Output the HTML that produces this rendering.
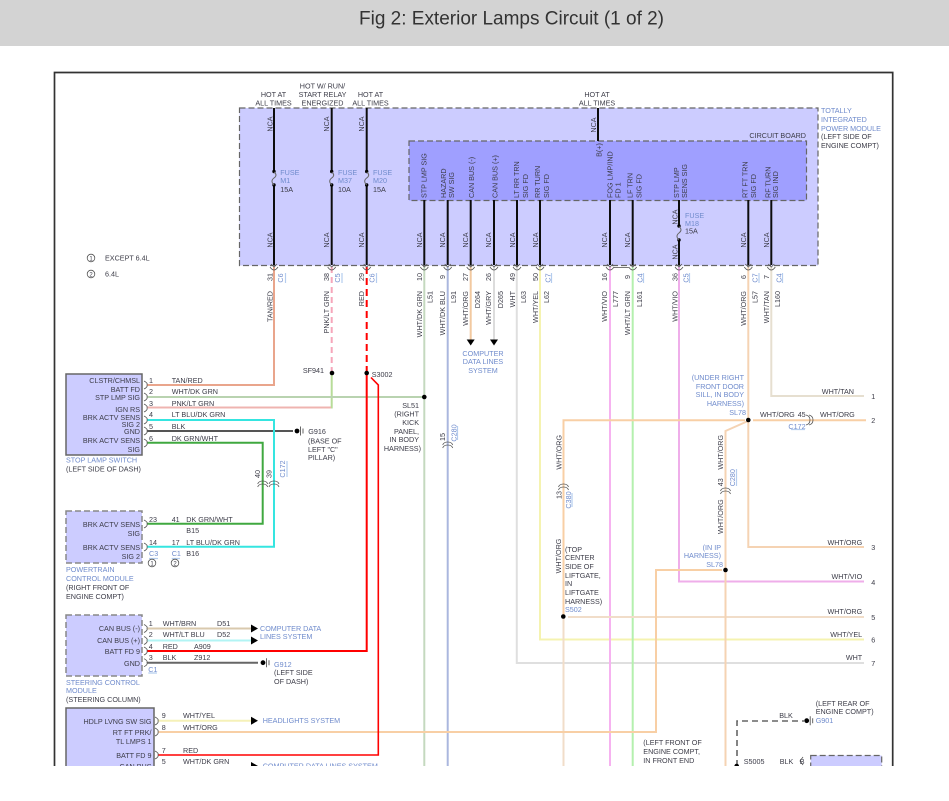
<!DOCTYPE html>
<html><head><meta charset="utf-8"><title>Fig 2: Exterior Lamps Circuit (1 of 2)</title>
<style>
html,body{margin:0;padding:0;background:#fff;width:949px;height:801px;overflow:hidden}
svg{display:block}
text{font-family:"Liberation Sans",sans-serif;font-size:7.2px;fill:#3c3c48}
.b,.b text{fill:#6f8bcc}
.e{text-anchor:end}.m{text-anchor:middle}
.w{fill:none;stroke-width:2}
.k{fill:none;stroke:#111;stroke-width:2}
.c{fill:none;stroke:#555;stroke-width:.8}
.u{stroke:#b5cdee;stroke-width:1.2}
</style></head><body>
<svg width="949" height="801" viewBox="0 0 949 801" xmlns="http://www.w3.org/2000/svg">
<defs>
<filter id="bl" filterUnits="userSpaceOnUse" x="0" y="46" width="949" height="755"><feGaussianBlur stdDeviation="0.3"/></filter>
<path id="lc" d="M-3-4Q1-2 0 0Q1 2-3 4" fill="none" stroke="#555" stroke-width=".8"/>
<path id="bc" d="M-4 1Q-2 4 0 4Q2 4 4 1M-3-2L0 1L3-2" fill="none" stroke="#555" stroke-width=".8"/>
<path id="tc" d="M-5 3Q-4 0 0 0Q4 0 5 3M-5 6Q-4 3 0 3Q4 3 5 6" fill="none" stroke="#555" stroke-width=".8"/>
<path id="vc" d="M-4-5Q0-4 0 0Q0 4-4 5M-1-5Q3-4 3 0Q3 4-1 5" fill="none" stroke="#555" stroke-width=".8"/>
<path id="ar" d="M0-4L7 0L0 4Z" fill="#000"/>
<path id="ad" d="M-4 0L4 0L0 6Z" fill="#000"/>
<g id="gnd"><circle r="2.4" fill="#000"/><path d="M3.5-4.5V4.5M6-2.5V2.5" stroke="#555" stroke-width=".9"/></g>
</defs>
<rect width="949" height="46" fill="#d3d3d3"/>
<text x="359" y="24.500" textLength="305" style="font-size:19px;fill:#333">Fig 2: Exterior Lamps Circuit (1 of 2)</text>
<g filter="url(#bl)">
<path d="M54.500 766V72.500H892.700V766" fill="none" stroke="#333" stroke-width="1.700"/>

<rect x="239.500" y="108" width="578.500" height="157.500" fill="#ccf" stroke="#666" stroke-width="1.200" stroke-dasharray="6 3"/>
<rect x="409" y="141" width="397.500" height="59.500" fill="#9f9fff" stroke="#666" stroke-width="1.200" stroke-dasharray="6 3"/>

<!-- TIPM wires -->
<path class="k" d="M274 108V171M274 186V265M331.700 108V171M331.700 186V265M366.700 108V171M366.700 186V265M598 108V141M424.300 200V265M447.700 200V265M470.700 200V265M494 200V265M517 200V265M540 200V265M610 200V265M632.700 200V265M679 200V226M679 240V265M748.300 200V265M771.300 200V265"/>
<g fill="#000"><circle cx="274" cy="171.500" r="1.700"/><circle cx="274" cy="185" r="1.700"/><circle cx="331.700" cy="171.500" r="1.700"/><circle cx="331.700" cy="185" r="1.700"/><circle cx="366.700" cy="171.500" r="1.700"/><circle cx="366.700" cy="185" r="1.700"/><circle cx="679" cy="226" r="1.700"/><circle cx="679" cy="240" r="1.700"/></g>
<path d="M274 172Q278 175 274 178Q270 181 274 185M331.700 172Q335.700 175 331.700 178Q327.700 181 331.700 185M366.700 172Q370.700 175 366.700 178Q362.700 181 366.700 185M679 226.500Q683 230 679 233Q675 236 679 240" fill="none" stroke="#666"/>

<!-- harness wires -->
<g class="w">
<path stroke="#e9a58c" d="M274 267V385H147"/>
<path stroke="#f6a6ba" stroke-dasharray="6 4" d="M331.700 267V373"/>
<path stroke="#b7dc98" d="M331.700 373V408.500"/>
<path stroke="#efb4b0" d="M331 407.500H147"/>
<path stroke="#b9d3b0" d="M147 397H424"/>
<path stroke="#c4d9bf" d="M424.300 267V766"/>
<path stroke="#aab7de" d="M447.700 267V766"/>
<path stroke="#f2c9a0" d="M470.700 267V340"/>
<path stroke="#dcdcdc" d="M494 267V340"/>
<path stroke="#dfdfdf" d="M516.800 267V663H864"/>
<path stroke="#f5f3b0" d="M540 267V639.500H864"/>
<path stroke="#f6b2f0" d="M610 267V766"/>
<path stroke="#b4f0ae" d="M632.700 267V766"/>
<path stroke="#efaeea" d="M679 267V581.500H864"/>
<path stroke="#f5d3b3" d="M748.300 267V547H864"/>
<path stroke="#e6dfd0" d="M771.300 267V396H864"/>
<path stroke="#f8cfa5" d="M866 420.300H753M745 420.300H563.500V616"/>
<path stroke="#f1ddc9" d="M563.500 616V766M568 617H864"/>
<path stroke="#f5d3b3" d="M748 421L725.500 431V766"/>
<path stroke="#f8cfa5" d="M722 570H656V732H158"/>
<path stroke="#d9c9ae" d="M147 628.500H252"/>
<path stroke="#b2f4f4" d="M147 640.500H252"/>
<path stroke="#f5f1b8" d="M158 720.700H252"/>
<path stroke="#666" d="M147 662.700H258"/>
<path stroke="#555" d="M147 431H293"/>
<path stroke="#35e5e0" d="M147 420H274V546.700H147"/>
<path stroke="#3fa83f" d="M147 442.700H262.700V523.700H147"/>
</g>
<g fill="none" stroke="#f00" stroke-width="2">
<path stroke-dasharray="7 4" d="M366.700 267V373"/>
<path d="M366.700 373V651H147"/>
<path stroke-width="1.600" d="M371 377.500L378.300 385V755H158"/>
</g>
<path d="M737 766V721H804" fill="none" stroke="#666" stroke-width="1.600" stroke-dasharray="6 4"/>

<!-- boxes -->
<rect x="66" y="374" width="76" height="81" fill="#ccf" stroke="#666" stroke-width="1.500"/>
<rect x="66" y="511" width="76" height="52" fill="#ccf" stroke="#888" stroke-width="1.500" stroke-dasharray="6 3"/>
<rect x="66" y="615" width="76" height="61" fill="#ccf" stroke="#888" stroke-width="1.500" stroke-dasharray="6 3"/>
<rect x="66" y="708" width="88" height="70" fill="#ccf" stroke="#666" stroke-width="1.500"/>
<rect x="810.700" y="755.500" width="71" height="30" fill="#ccf" stroke="#666" stroke-width="1.200" stroke-dasharray="6 3"/>

<!-- nodes -->
<g fill="#000"><circle cx="332" cy="373" r="2.300"/><circle cx="366.700" cy="373" r="2.300"/><circle cx="424.300" cy="397" r="2.300"/><circle cx="748.300" cy="420" r="2.300"/><circle cx="725.500" cy="570" r="2.300"/><circle cx="563.300" cy="616.500" r="2.300"/><circle cx="736.700" cy="766" r="2.300"/></g>

<!-- connector symbols -->
<g>
<use href="#bc" x="274" y="266"/><use href="#bc" x="331.700" y="266"/><use href="#bc" x="366.700" y="266"/><use href="#bc" x="424.300" y="266"/><use href="#bc" x="447.700" y="266"/><use href="#bc" x="470.700" y="266"/><use href="#bc" x="494" y="266"/><use href="#bc" x="517" y="266"/><use href="#bc" x="540" y="266"/><use href="#bc" x="610" y="266"/><use href="#bc" x="632.700" y="266"/><use href="#bc" x="679" y="266"/><use href="#bc" x="748.300" y="266"/><use href="#bc" x="771.300" y="266"/>
<path class="c" d="M614 267.500H628.500"/>
<use href="#lc" x="147" y="385"/><use href="#lc" x="147" y="397"/><use href="#lc" x="147" y="408"/><use href="#lc" x="147" y="420"/><use href="#lc" x="147" y="431"/><use href="#lc" x="147" y="443"/>
<use href="#lc" x="147" y="524"/><use href="#lc" x="147" y="547"/>
<use href="#lc" x="147" y="628.500"/><use href="#lc" x="147" y="640.500"/><use href="#lc" x="147" y="651"/><use href="#lc" x="147" y="662.700"/>
<use href="#lc" x="158" y="721"/><use href="#lc" x="158" y="732"/><use href="#lc" x="158" y="755"/>
<use href="#tc" x="262.700" y="481"/><use href="#tc" x="274" y="481"/>
<use href="#tc" x="447.700" y="442"/><use href="#tc" x="563.500" y="484"/><use href="#tc" x="725.500" y="488"/>
<use href="#vc" x="810" y="420"/>
<path class="c" d="M803 757L800 761L803 765"/>
</g>
<use href="#ar" x="251" y="628.500"/><use href="#ar" x="251" y="640.500"/><use href="#ar" x="251" y="720.700"/><use href="#ar" x="251" y="766"/>
<use href="#ad" x="470.700" y="339.500"/><use href="#ad" x="494" y="339.500"/>
<use href="#gnd" x="297" y="431"/><use href="#gnd" x="263" y="662.700"/><use href="#gnd" x="806.700" y="720.700"/>

<!-- underlines for connector refs -->
<path class="u" d="M285.500 273V283M342 273V283M376.500 273V283M551.500 273V283M643.500 273V283M689.500 273V283M759 273V283M782.500 273V283M287 461V477M457.500 426V440M572 493V507M736.500 469V486M149 558.500H158M171.700 558.500H180M148.300 673H157M791 429.500H805"/>

<g>
<!-- top labels -->
<text class="m" x="273.500" y="97">HOT AT</text><text class="m" x="273.500" y="105.700">ALL TIMES</text>
<text class="m" x="322.500" y="88.700">HOT W/ RUN/</text><text class="m" x="322.500" y="97">START RELAY</text><text class="m" x="322.500" y="105.700">ENERGIZED</text>
<text class="m" x="370.500" y="97">HOT AT</text><text class="m" x="370.500" y="105.700">ALL TIMES</text>
<text class="m" x="597" y="97">HOT AT</text><text class="m" x="597" y="105.700">ALL TIMES</text>
<text class="b" x="821" y="113">TOTALLY</text><text class="b" x="821" y="122">INTEGRATED</text><text class="b" x="821" y="131">POWER MODULE</text><text x="821" y="139">(LEFT SIDE OF</text><text x="821" y="148">ENGINE COMPT)</text>
<text class="e" x="806" y="138">CIRCUIT BOARD</text>
<!-- fuse labels -->
<g class="b"><text x="280.300" y="175">FUSE</text><text x="280.300" y="183">M1</text><text x="338" y="175">FUSE</text><text x="338" y="183">M37</text><text x="373" y="175">FUSE</text><text x="373" y="183">M20</text><text x="685" y="218">FUSE</text><text x="685" y="226">M18</text></g>
<text x="280.300" y="192">15A</text><text x="338" y="192">10A</text><text x="373" y="192">15A</text><text x="685" y="233.700">15A</text>
<!-- NCA -->
<g>
<text class="m" transform="translate(272.500,124) rotate(-90)">NCA</text><text class="m" transform="translate(329,124) rotate(-90)">NCA</text><text class="m" transform="translate(364.200,124) rotate(-90)">NCA</text><text class="m" transform="translate(595.800,125) rotate(-90)">NCA</text>
<text class="m" transform="translate(272.500,240) rotate(-90)">NCA</text><text class="m" transform="translate(329,240) rotate(-90)">NCA</text><text class="m" transform="translate(364.200,240) rotate(-90)">NCA</text>
<text class="m" transform="translate(422.200,240) rotate(-90)">NCA</text><text class="m" transform="translate(445.200,240) rotate(-90)">NCA</text><text class="m" transform="translate(467.800,240) rotate(-90)">NCA</text><text class="m" transform="translate(490.800,240) rotate(-90)">NCA</text><text class="m" transform="translate(515.200,240) rotate(-90)">NCA</text><text class="m" transform="translate(538.200,240) rotate(-90)">NCA</text>
<text class="m" transform="translate(606.800,240) rotate(-90)">NCA</text><text class="m" transform="translate(629.800,240) rotate(-90)">NCA</text><text class="m" transform="translate(745.800,240) rotate(-90)">NCA</text><text class="m" transform="translate(769.200,240) rotate(-90)">NCA</text>
<text class="m" transform="translate(677.500,217) rotate(-90)">NCA</text><text class="m" transform="translate(677.500,252) rotate(-90)">NCA</text>
</g>
<!-- board labels -->
<text transform="translate(426.500,198) rotate(-90)">STP LMP SIG</text><text transform="translate(446.200,198) rotate(-90)">HAZARD</text><text transform="translate(454.200,198) rotate(-90)">SW SIG</text><text transform="translate(474.200,198) rotate(-90)">CAN BUS (-)</text><text transform="translate(497.500,198) rotate(-90)">CAN BUS (+)</text><text transform="translate(519.200,198) rotate(-90)">LT RR TRN</text><text transform="translate(528.200,198) rotate(-90)">SIG FD</text><text transform="translate(539.800,198) rotate(-90)">RR TURN</text><text transform="translate(548.800,198) rotate(-90)">SIG FD</text>
<text transform="translate(612.500,198) rotate(-90)">FOG LMP/IND</text><text transform="translate(620.500,198) rotate(-90)">FD 1</text><text transform="translate(632.500,198) rotate(-90)">LF TRN</text><text transform="translate(641.500,198) rotate(-90)">SIG FD</text><text transform="translate(679.200,198) rotate(-90)">STP LMP</text><text transform="translate(687.200,198) rotate(-90)">SENS SIG</text><text transform="translate(747.500,198) rotate(-90)">RT FT TRN</text><text transform="translate(756.200,198) rotate(-90)">SIG FD</text><text transform="translate(770.500,198) rotate(-90)">RF TURN</text><text transform="translate(777.800,198) rotate(-90)">SIG IND</text>
<text class="m" transform="translate(601.500,150) rotate(-90)">B(+)</text>
<!-- pins -->
<g>
<text class="m" transform="translate(272.500,277) rotate(-90)">31</text><text class="m" transform="translate(329,277) rotate(-90)">38</text><text class="m" transform="translate(364.200,277) rotate(-90)">29</text><text class="m" transform="translate(422,277) rotate(-90)">10</text><text class="m" transform="translate(445.200,277) rotate(-90)">9</text><text class="m" transform="translate(467.800,277) rotate(-90)">27</text><text class="m" transform="translate(490.800,277) rotate(-90)">26</text><text class="m" transform="translate(515.200,277) rotate(-90)">49</text><text class="m" transform="translate(538.200,277) rotate(-90)">50</text><text class="m" transform="translate(606.800,277) rotate(-90)">16</text><text class="m" transform="translate(629.800,277) rotate(-90)">9</text><text class="m" transform="translate(677.500,277) rotate(-90)">36</text><text class="m" transform="translate(745.800,277) rotate(-90)">6</text><text class="m" transform="translate(769.200,277) rotate(-90)">7</text>
</g>
<g class="b">
<text class="m" transform="translate(283.200,278) rotate(-90)">C6</text><text class="m" transform="translate(339.800,278) rotate(-90)">C5</text><text class="m" transform="translate(374.500,278) rotate(-90)">C6</text><text class="m" transform="translate(550.500,278) rotate(-90)">C7</text><text class="m" transform="translate(642.500,278) rotate(-90)">C4</text><text class="m" transform="translate(688.500,278) rotate(-90)">C5</text><text class="m" transform="translate(757.500,278) rotate(-90)">C7</text><text class="m" transform="translate(781.500,278) rotate(-90)">C4</text>
</g>
<!-- wire labels -->
<text class="e" transform="translate(272.500,291) rotate(-90)">TAN/RED</text><text class="e" transform="translate(329,291) rotate(-90)">PNK/LT GRN</text><text class="e" transform="translate(364.200,291) rotate(-90)">RED</text>
<text class="e" transform="translate(422,291) rotate(-90)">WHT/DK GRN</text><text class="e" transform="translate(445.200,291) rotate(-90)">WHT/DK BLU</text><text class="e" transform="translate(467.800,291) rotate(-90)">WHT/ORG</text><text class="e" transform="translate(490.800,291) rotate(-90)">WHT/GRY</text><text class="e" transform="translate(515.200,291) rotate(-90)">WHT</text><text class="e" transform="translate(538.200,291) rotate(-90)">WHT/YEL</text>
<text class="e" transform="translate(606.800,291) rotate(-90)">WHT/VIO</text><text class="e" transform="translate(629.800,291) rotate(-90)">WHT/LT GRN</text><text class="e" transform="translate(677.500,291) rotate(-90)">WHT/VIO</text><text class="e" transform="translate(745.800,291) rotate(-90)">WHT/ORG</text><text class="e" transform="translate(769.200,291) rotate(-90)">WHT/TAN</text>
<text class="e" transform="translate(432.500,291) rotate(-90)">L51</text><text class="e" transform="translate(456.200,291) rotate(-90)">L91</text><text class="e" transform="translate(479.800,291) rotate(-90)">D264</text><text class="e" transform="translate(503.200,291) rotate(-90)">D265</text><text class="e" transform="translate(525.800,291) rotate(-90)">L63</text><text class="e" transform="translate(549.200,291) rotate(-90)">L62</text><text class="e" transform="translate(618.200,291) rotate(-90)">L777</text><text class="e" transform="translate(641.800,291) rotate(-90)">L161</text><text class="e" transform="translate(757.500,291) rotate(-90)">L57</text><text class="e" transform="translate(779.800,291) rotate(-90)">L160</text>
<!-- legend -->
<circle cx="91" cy="258" r="3.800" fill="none" stroke="#555" stroke-width=".8"/><text class="m" x="91" y="260.500" style="font-size:6px">1</text><text x="105" y="260.500">EXCEPT 6.4L</text>
<circle cx="91" cy="274" r="3.800" fill="none" stroke="#555" stroke-width=".8"/><text class="m" x="91" y="276.500" style="font-size:6px">2</text><text x="105" y="276.500">6.4L</text>
<!-- stop lamp switch -->
<g><text class="e" x="140" y="383.200">CLSTR/CHMSL</text><text class="e" x="140" y="392.200">BATT FD</text><text class="e" x="140" y="400.200">STP LMP SIG</text><text class="e" x="140" y="411.800">IGN RS</text><text class="e" x="140" y="420.200">BRK ACTV SENS</text><text class="e" x="140" y="427.200">SIG 2</text><text class="e" x="140" y="434.200">GND</text><text class="e" x="140" y="442.800">BRK ACTV SENS</text><text class="e" x="140" y="451.800">SIG</text></g>
<text x="149" y="383.200">1</text><text x="171.700" y="383.200">TAN/RED</text><text x="149" y="394.200">2</text><text x="171.700" y="394.200">WHT/DK GRN</text><text x="149" y="405.800">3</text><text x="171.700" y="405.800">PNK/LT GRN</text><text x="149" y="417.200">4</text><text x="171.700" y="417.200">LT BLU/DK GRN</text><text x="149" y="428.800">5</text><text x="171.700" y="428.800">BLK</text><text x="149" y="440.800">6</text><text x="171.700" y="440.800">DK GRN/WHT</text>
<text class="b" x="66" y="462.700">STOP LAMP SWITCH</text><text x="66" y="471.700">(LEFT SIDE OF DASH)</text>
<text transform="translate(260.200,474) rotate(-90)" class="m">40</text><text transform="translate(271.500,474) rotate(-90)" class="m">39</text><text class="b m" transform="translate(284.800,469) rotate(-90)">C172</text>
<text x="308.300" y="433.800">G916</text><text x="308" y="443.500">(BASE OF</text><text x="308" y="452.200">LEFT "C"</text><text x="308" y="460.200">PILLAR)</text>
<text class="e" x="324" y="373.200">SF941</text><text x="371.700" y="376.800">S3002</text>
<g><text class="e" x="419" y="407.800">SL51</text><text class="e" x="419" y="416.500">(RIGHT</text><text class="e" x="419" y="425.200">KICK</text><text class="e" x="419" y="433.800">PANEL,</text><text class="e" x="419" y="442.200">IN BODY</text><text class="e" x="421" y="451.200">HARNESS)</text></g>
<g class="b"><text class="m" x="483" y="355.800">COMPUTER</text><text class="m" x="483" y="363.800">DATA LINES</text><text class="m" x="483" y="372.800">SYSTEM</text></g>
<text class="m" transform="translate(445.200,437) rotate(-90)">15</text><text class="b m" transform="translate(456.500,433) rotate(-90)">C280</text>
<text class="m" transform="translate(561.500,452.300) rotate(-90)">WHT/ORG</text><text class="m" transform="translate(561.500,495) rotate(-90)">13</text><text class="b m" transform="translate(571.200,500) rotate(-90)">C380</text><text class="m" transform="translate(561,556) rotate(-90)">WHT/ORG</text>
<g><text x="565" y="551.800">(TOP</text><text x="565" y="559.800">CENTER</text><text x="565" y="568.800">SIDE OF</text><text x="565" y="578.200">LIFTGATE,</text><text x="565" y="585.800">IN</text><text x="565" y="595.200">LIFTGATE</text><text x="565" y="603.800">HARNESS)</text></g><text class="b" x="565" y="611.800">S502</text>
<!-- PCM -->
<text class="e" x="140" y="526.800">BRK ACTV SENS</text><text class="e" x="140" y="535.800">SIG</text><text class="e" x="140" y="549.800">BRK ACTV SENS</text><text class="e" x="140" y="558.800">SIG 2</text>
<text x="149" y="521.800">23</text><text x="171.700" y="521.800">41</text><text x="186.300" y="521.800">DK GRN/WHT</text><text x="186.300" y="533.200">B15</text><text x="149" y="544.800">14</text><text x="171.700" y="544.800">17</text><text x="186.300" y="544.800">LT BLU/DK GRN</text><text class="b" x="149" y="555.800">C3</text><text class="b" x="171.700" y="555.800">C1</text><text x="186.300" y="555.800">B16</text>
<circle cx="152" cy="563" r="3.800" fill="none" stroke="#555" stroke-width=".8"/><text class="m" x="152" y="565.400" style="font-size:6px">1</text><circle cx="175" cy="563" r="3.800" fill="none" stroke="#555" stroke-width=".8"/><text class="m" x="175" y="565.400" style="font-size:6px">2</text>
<text class="b" x="66" y="571.800">POWERTRAIN</text><text class="b" x="66" y="580.800">CONTROL MODULE</text><text x="66" y="589.800">(RIGHT FRONT OF</text><text x="66" y="598.800">ENGINE COMPT)</text>
<!-- steering -->
<text class="e" x="140" y="630.800">CAN BUS (-)</text><text class="e" x="140" y="642.800">CAN BUS (+)</text><text class="e" x="140" y="653.800">BATT FD 9</text><text class="e" x="140" y="665.800">GND</text>
<text x="148.700" y="625.800">1</text><text x="162.700" y="625.800">WHT/BRN</text><text x="217" y="625.800">D51</text><text x="148.700" y="637.200">2</text><text x="162.700" y="637.200">WHT/LT BLU</text><text x="217" y="637.200">D52</text><text x="148.700" y="649.200">4</text><text x="162.700" y="649.200">RED</text><text x="194" y="649.200">A909</text><text x="148.700" y="659.800">3</text><text x="162.700" y="659.800">BLK</text><text x="194" y="659.800">Z912</text><text class="b" x="148.300" y="672.200">C1</text>
<text class="b" x="260" y="630.800">COMPUTER DATA</text><text class="b" x="260" y="638.800">LINES SYSTEM</text>
<text class="b" x="274" y="666.800">G912</text><text x="274" y="674.800">(LEFT SIDE</text><text x="274" y="683.800">OF DASH)</text>
<text class="b" x="66" y="684.800">STEERING CONTROL</text><text class="b" x="66" y="692.800">MODULE</text><text x="66" y="701.800">(STEERING COLUMN)</text>
<!-- headlights -->
<text class="e" x="151.500" y="723.800">HDLP LVNG SW SIG</text><text class="e" x="151.500" y="734.800">RT FT PRK/</text><text class="e" x="151.500" y="743.800">TL LMPS 1</text><text class="e" x="151.500" y="757.800">BATT FD 9</text><text class="e" x="151.500" y="768.800">CAN BUS</text>
<text x="161.700" y="717.800">9</text><text x="183" y="717.800">WHT/YEL</text><text x="161.700" y="729.800">8</text><text x="183" y="729.800">WHT/ORG</text><text x="161.700" y="752.800">7</text><text x="183" y="752.800">RED</text><text x="161.700" y="763.800">5</text><text x="183" y="763.800">WHT/DK GRN</text>
<text class="b" x="262.700" y="722.800">HEADLIGHTS SYSTEM</text><text class="b" x="262.700" y="768.500">COMPUTER DATA LINES SYSTEM</text>
<!-- right side -->
<text class="b e" x="744" y="379.800">(UNDER RIGHT</text><text class="b e" x="744" y="388.800">FRONT DOOR</text><text class="b e" x="744" y="396.800">SILL, IN BODY</text><text class="b e" x="744" y="405.800">HARNESS)</text><text class="b e" x="746" y="414.800">SL78</text>
<text x="760" y="416.800">WHT/ORG</text><text x="797.700" y="416.800">45</text><text x="820" y="416.800">WHT/ORG</text><text class="b m" x="797" y="428.800">C172</text>
<text class="m" transform="translate(723.200,452.300) rotate(-90)">WHT/ORG</text><text class="m" transform="translate(723.200,482.300) rotate(-90)">43</text><text class="b m" transform="translate(734.800,477.700) rotate(-90)">C280</text><text class="m" transform="translate(723.200,516.700) rotate(-90)">WHT/ORG</text>
<text class="b e" x="721" y="549.800">(IN IP</text><text class="b e" x="721" y="558.200">HARNESS)</text><text class="b e" x="723" y="566.800">SL78</text>
<text class="e" x="854" y="394.200">WHT/TAN</text><text class="e" x="862.200" y="545">WHT/ORG</text><text class="e" x="862.200" y="578.800">WHT/VIO</text><text class="e" x="862.200" y="614.200">WHT/ORG</text><text class="e" x="862.200" y="637.200">WHT/YEL</text><text class="e" x="862.200" y="659.800">WHT</text>
<text class="m" x="873.300" y="399.200">1</text><text class="m" x="873.300" y="422.800">2</text><text class="m" x="873.300" y="549.800">3</text><text class="m" x="873.300" y="585.200">4</text><text class="m" x="873.300" y="620.200">5</text><text class="m" x="873.300" y="642.500">6</text><text class="m" x="873.300" y="665.800">7</text>
<!-- bottom right -->
<text x="815.700" y="705.800">(LEFT REAR OF</text><text x="815.700" y="714.200">ENGINE COMPT)</text><text class="b" x="815.700" y="723.200">G901</text>
<text class="m" x="786" y="717.800">BLK</text><text x="743.700" y="764.200">S5005</text><text x="779.700" y="764.200">BLK</text><text x="799.700" y="764.200">B</text>
<text x="643.300" y="744.800">(LEFT FRONT OF</text><text x="643.300" y="753.800">ENGINE COMPT,</text><text x="643.300" y="762.800">IN FRONT END</text>
</g>
</g>
<rect x="0" y="766" width="949" height="35" fill="#fff"/>
</svg>
</body></html>
